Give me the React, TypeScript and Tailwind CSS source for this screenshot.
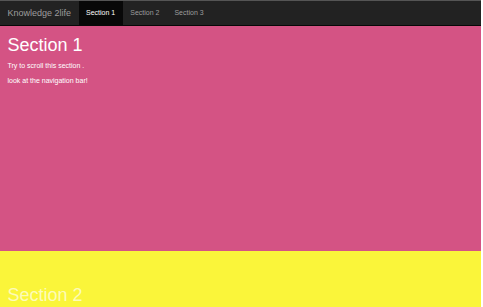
import React from 'react';

const links = ['Section 1', 'Section 2', 'Section 3'];

export default function App() {
  return (
    <div className="min-h-screen w-full border-r-2 border-white/40 font-['Liberation_Sans',Arial,sans-serif]">
      <nav className="h-[26px] border-t border-t-[#555] border-b border-b-[#080808] bg-[#222] flex items-stretch">
        <a className="flex items-center px-[7.5px] text-[9px] leading-[10px] text-[#9d9d9d]">Knowledge 2life</a>
        <ul className="flex items-stretch">
          {links.map((l, i) => (
            <li
              key={l}
              className={`flex items-center px-[7.5px] text-[7px] leading-[10px] ${
                i === 0 ? 'bg-[#080808] text-white' : 'text-[#9d9d9d]'
              }`}
            >
              {l}
            </li>
          ))}
        </ul>
      </nav>

      <section className="h-[225px] bg-[#d45384] px-[7.5px] pt-[10px] text-white">
        <h1 className="text-[18px] leading-[19.8px] mb-[5px]">Section 1</h1>
        <p className="text-[7px] leading-[10px] mb-[5px]">Try to scroll this section .</p>
        <p className="text-[7px] leading-[10px] mb-[5px]">look at the navigation bar!</p>
      </section>

      <section className="h-[250px] bg-[#faf53a] px-[7.5px] pt-[35px] text-[#fdfbb8]">
        <h1 className="text-[18px] leading-[19.8px] mb-[5px]">Section 2</h1>
      </section>
    </div>
  );
}
